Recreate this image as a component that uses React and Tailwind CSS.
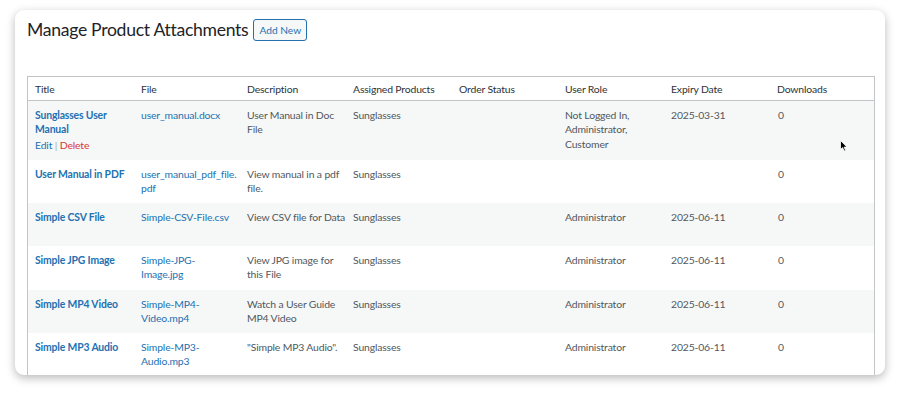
import React from "react";

const rows = [
  {
    title: ["Sunglasses User", "Manual"],
    actions: true,
    file: ["user_manual.docx"],
    desc: ["User Manual in Doc", "File"],
    product: "Sunglasses",
    role: ["Not Logged In,", "Administrator,", "Customer"],
    expiry: "2025-03-31",
    downloads: "0",
    h: "h-[59px]",
    gray: true,
  },
  {
    title: ["User Manual in PDF"],
    file: ["user_manual_pdf_file.", "pdf"],
    desc: ["View manual in a pdf", "file."],
    product: "Sunglasses",
    role: [],
    expiry: "",
    downloads: "0",
    h: "h-[43px]",
  },
  {
    title: ["Simple CSV File"],
    file: ["Simple-CSV-File.csv"],
    desc: ["View CSV file for Data"],
    product: "Sunglasses",
    role: ["Administrator"],
    expiry: "2025-06-11",
    downloads: "0",
    h: "h-[43px]",
    gray: true,
  },
  {
    title: ["Simple JPG Image"],
    file: ["Simple-JPG-", "Image.jpg"],
    desc: ["View JPG image for", "this File"],
    product: "Sunglasses",
    role: ["Administrator"],
    expiry: "2025-06-11",
    downloads: "0",
    h: "h-[44px]",
  },
  {
    title: ["Simple MP4 Video"],
    file: ["Simple-MP4-", "Video.mp4"],
    desc: ["Watch a User Guide", "MP4 Video"],
    product: "Sunglasses",
    role: ["Administrator"],
    expiry: "2025-06-11",
    downloads: "0",
    h: "h-[43px]",
    gray: true,
  },
  {
    title: ["Simple MP3 Audio"],
    file: ["Simple-MP3-", "Audio.mp3"],
    desc: ['"Simple MP3 Audio".'],
    product: "Sunglasses",
    role: ["Administrator"],
    expiry: "2025-06-11",
    downloads: "0",
    h: "h-[50px]",
  },
];

const headers = [
  "Title",
  "File",
  "Description",
  "Assigned Products",
  "Order Status",
  "User Role",
  "Expiry Date",
  "Downloads",
];

function Lines({ lines }) {
  return lines.map((l, i) => (
    <div key={i} className="whitespace-nowrap">
      {l}
    </div>
  ));
}

export default function App() {
  const font = { fontFamily: "Lato, 'Liberation Sans', sans-serif" };
  return (
    <div
      className="w-[899px] h-[394px] bg-white overflow-hidden pt-[10px] pl-[15px] relative"
      style={font}
    >
      <div className="w-[870px] h-[365px] bg-white rounded-[9px] shadow-[0_3px_10px_rgba(0,0,0,0.28)] overflow-hidden pl-[12px] pr-[10px]">
        <div className="flex items-center pt-[9px] h-[31px]">
          <h1 className="text-[17.6px] leading-[22px] text-[#1d2327] tracking-[-0.3px]">
            Manage Product Attachments
          </h1>
          <button className="ml-[5px] h-[22px] px-[5px] border border-[#2271b1] rounded-[3px] bg-[#f6f7f7] text-[#2271b1] text-[10.2px] leading-[20px]">
            Add New
          </button>
        </div>
        <div className="mt-[35px] w-[848px] border-l border-t border-r border-[#c3c4c7] text-[10.4px] leading-[14.4px] tracking-[-0.15px]">
          <div className="grid grid-cols-[repeat(8,106px)] h-[24px] pt-[1px] items-center border-b border-[#c3c4c7] bg-white">
            {headers.map((h) => (
              <div key={h} className="px-[7px] text-[#2c3338] whitespace-nowrap">
                {h}
              </div>
            ))}
          </div>
          {rows.map((r, i) => (
            <div
              key={i}
              className={`grid grid-cols-[repeat(8,106px)] ${r.h} pt-[7px] ${
                r.gray ? "bg-[#f6f7f7]" : "bg-white"
              }`}
            >
              <div className="px-[7px]">
                <div className="font-bold text-[#2271b1]">
                  <Lines lines={r.title} />
                </div>
                {r.actions && (
                  <div className="mt-[1px] whitespace-nowrap">
                    <span className="text-[#2271b1]">Edit</span>
                    <span className="text-[#a7aaad]"> | </span>
                    <span className="text-[#d63638]">Delete</span>
                  </div>
                )}
              </div>
              <div className="px-[7px] text-[#2271b1]">
                <Lines lines={r.file} />
              </div>
              <div className="px-[7px] text-[#50575e]">
                <Lines lines={r.desc} />
              </div>
              <div className="px-[7px] text-[#50575e]">{r.product}</div>
              <div className="px-[7px] text-[#50575e]"></div>
              <div className="px-[7px] text-[#50575e]">
                <Lines lines={r.role} />
              </div>
              <div className="px-[7px] text-[#50575e]">{r.expiry}</div>
              <div className="pl-[8px] pr-[6px] text-[#50575e]">{r.downloads}</div>
            </div>
          ))}
        </div>
      </div>
      <svg
        className="absolute left-[840px] top-[140px]"
        width="8"
        height="12"
        viewBox="0 0 8 12"
      >
        <path
          d="M0.5 0.5 L0.5 9.5 L2.6 7.6 L4.2 11 L5.6 10.4 L4.1 7.1 L7 7.1 Z"
          fill="#000"
          stroke="#fff"
          strokeWidth="0.8"
        />
      </svg>
    </div>
  );
}
